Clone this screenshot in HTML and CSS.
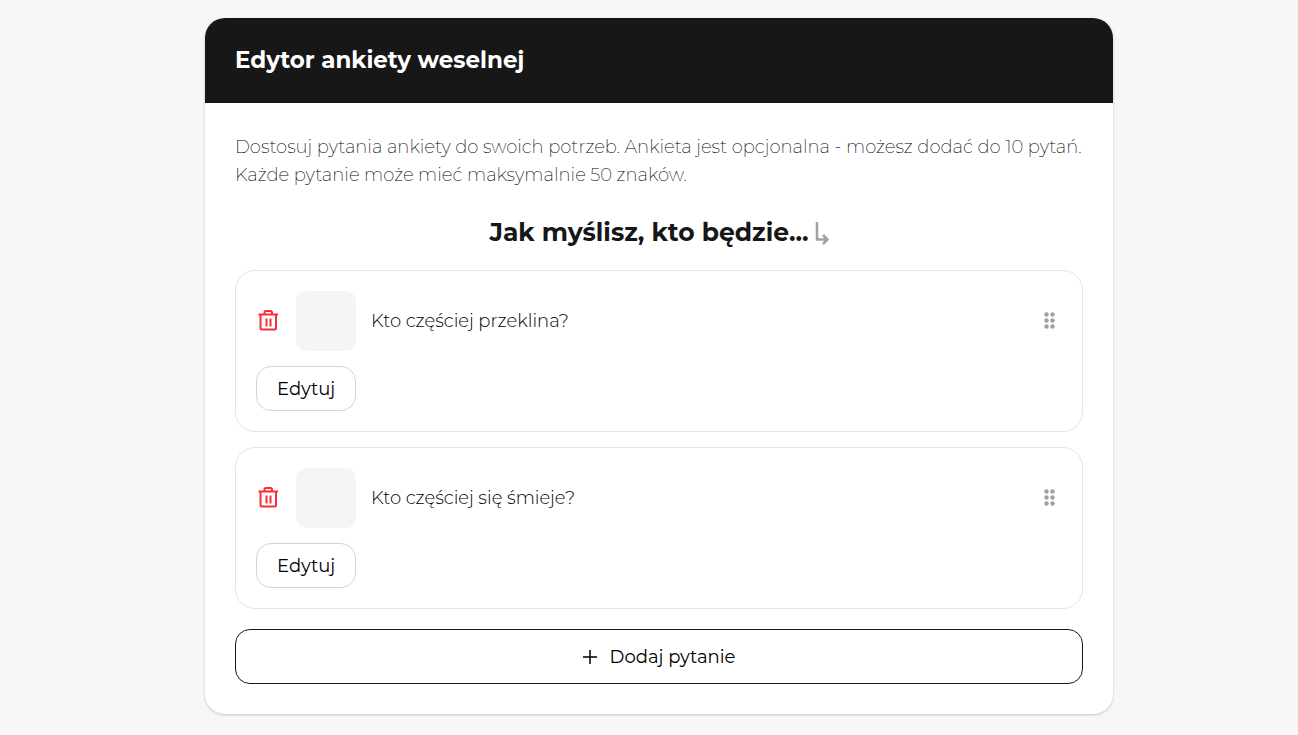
FILE: index.html
```html
<!DOCTYPE html>
<html lang="pl">
<head>
    <meta charset="UTF-8">
    <meta name="viewport" content="width=device-width, initial-scale=1.0">
    <title>Edytor ankiety weselnej</title>
    <link rel="stylesheet" href="styles.css">
</head>
<body>

    <main class="editor">
        <header class="editor-header">
            <h1>Edytor ankiety weselnej</h1>
        </header>

        <div class="editor-body">
            <p class="description">Dostosuj pytania ankiety do swoich potrzeb. Ankieta jest opcjonalna - możesz dodać do 10 pytań. Każde pytanie może mieć maksymalnie 50 znaków.</p>

            <h2 class="survey-title">
                Jak myślisz, kto będzie...
                <svg class="arrow" width="14" height="26" viewBox="0 0 14 26" aria-hidden="true">
                    <path d="M2 3V20.5H12M8 16L12.5 20.5L8 25"/>
                </svg>
            </h2>

            <!-- Lista pytań -->
            <ul class="questions">
                <li class="question">
                    <div class="question-row">
                        <button type="button" class="icon-button delete" aria-label="Usuń pytanie">
                            <svg width="24" height="24" viewBox="0 0 24 24" aria-hidden="true">
                                <path d="M2.5 5.5H22M4.5 5.5V19Q4.5 20.5 6 20.5H18.5Q20 20.5 20 19V5.5M8.5 5.5V3.5Q8.5 2 10 2H14.5Q16 2 16 3.5V5.5M10.5 9.5V17.5M14.5 9.5V17.5"/>
                            </svg>
                        </button>
                        <div class="thumb"></div>
                        <span class="question-text">Kto częściej przeklina?</span>
                        <button type="button" class="icon-button drag" aria-label="Przesuń pytanie">
                            <svg width="13" height="18" viewBox="0 0 13 18" aria-hidden="true">
                                <circle cx="3.5" cy="2.5" r="2.2"/><circle cx="9.5" cy="2.5" r="2.2"/>
                                <circle cx="3.5" cy="8.5" r="2.2"/><circle cx="9.5" cy="8.5" r="2.2"/>
                                <circle cx="3.5" cy="14.5" r="2.2"/><circle cx="9.5" cy="14.5" r="2.2"/>
                            </svg>
                        </button>
                    </div>
                    <button type="button" class="edit-button">Edytuj</button>
                </li>
                <li class="question">
                    <div class="question-row">
                        <button type="button" class="icon-button delete" aria-label="Usuń pytanie">
                            <svg width="24" height="24" viewBox="0 0 24 24" aria-hidden="true">
                                <path d="M2.5 5.5H22M4.5 5.5V19Q4.5 20.5 6 20.5H18.5Q20 20.5 20 19V5.5M8.5 5.5V3.5Q8.5 2 10 2H14.5Q16 2 16 3.5V5.5M10.5 9.5V17.5M14.5 9.5V17.5"/>
                            </svg>
                        </button>
                        <div class="thumb"></div>
                        <span class="question-text">Kto częściej się śmieje?</span>
                        <button type="button" class="icon-button drag" aria-label="Przesuń pytanie">
                            <svg width="13" height="18" viewBox="0 0 13 18" aria-hidden="true">
                                <circle cx="3.5" cy="2.5" r="2.2"/><circle cx="9.5" cy="2.5" r="2.2"/>
                                <circle cx="3.5" cy="8.5" r="2.2"/><circle cx="9.5" cy="8.5" r="2.2"/>
                                <circle cx="3.5" cy="14.5" r="2.2"/><circle cx="9.5" cy="14.5" r="2.2"/>
                            </svg>
                        </button>
                    </div>
                    <button type="button" class="edit-button">Edytuj</button>
                </li>
            </ul>

            <button type="button" class="add-button">
                <svg width="14" height="14" viewBox="0 0 14 14" aria-hidden="true">
                    <path d="M7 0V14M0 7H14"/>
                </svg>
                Dodaj pytanie
            </button>
        </div>
    </main>

</body>
</html>
```

FILE: styles.css
```css
* {
    box-sizing: border-box;
}

body {
    margin: 0;
    padding: 18px 20px 20px 40px;
    background-color: #f7f7f7;
    color: #171717;
    font-family: Montserrat, Inter, sans-serif;
    font-size: 18px;
    line-height: 28px;
}

h1, h2, p, ul {
    margin: 0;
    padding: 0;
}

button {
    font: inherit;
    color: inherit;
    cursor: pointer;
}

svg {
    display: block;
    fill: none;
    stroke: currentColor;
    stroke-width: 2;
}

/* Karta edytora */
.editor {
    max-width: 908px;
    margin: 0 auto;
    overflow: hidden;
    border-radius: 20px;
    background-color: #fff;
    box-shadow: 0 1px 3px rgba(0, 0, 0, 0.2);
}

.editor-header {
    padding: 26px 30px 27px;
    background-color: #171717;
    color: #fff;
}

.editor-header h1 {
    font-size: 23px;
    line-height: 32px;
    font-weight: 700;
}

.editor-body {
    padding: 30px;
}

.description {
    color: #000;
    font-weight: 200;
}

.survey-title {
    display: flex;
    justify-content: center;
    align-items: center;
    gap: 6px;
    margin: 25px 0 20px;
    font-size: 25px;
    line-height: 36px;
    font-weight: 700;
}

.arrow {
    color: #a1a1a1;
    stroke-width: 2.5;
}

/* Pytania */
.questions {
    display: flex;
    flex-direction: column;
    gap: 15px;
    list-style: none;
}

.question {
    padding: 20px;
    border: 1px solid #e5e5e5;
    border-radius: 20px;
}

.question-row {
    display: flex;
    align-items: center;
    gap: 15px;
    margin-bottom: 15px;
}

.icon-button {
    display: flex;
    align-items: center;
    width: 25px;
    height: 24px;
    padding: 0;
    border: 0;
    background: none;
}

.delete {
    color: #fb2c36;
}

.drag {
    justify-content: center;
    color: #a1a1a1;
    cursor: grab;
}

.drag svg {
    fill: currentColor;
    stroke: none;
}

.thumb {
    width: 60px;
    height: 60px;
    border-radius: 10px;
    background-color: #f5f5f5;
}

.question-text {
    flex: 1;
    color: #000;
    font-weight: 300;
}

.edit-button {
    display: block;
    height: 45px;
    padding: 0 20px;
    border: 1px solid #d4d4d4;
    border-radius: 15px;
    background-color: #fff;
    color: #000;
}

.add-button {
    display: flex;
    justify-content: center;
    align-items: center;
    gap: 13px;
    width: 100%;
    height: 55px;
    margin-top: 20px;
    border: 1px solid #171717;
    border-radius: 15px;
    background-color: #fff;
    color: #000;
}

.add-button svg {
    stroke-width: 1.5;
}
```
